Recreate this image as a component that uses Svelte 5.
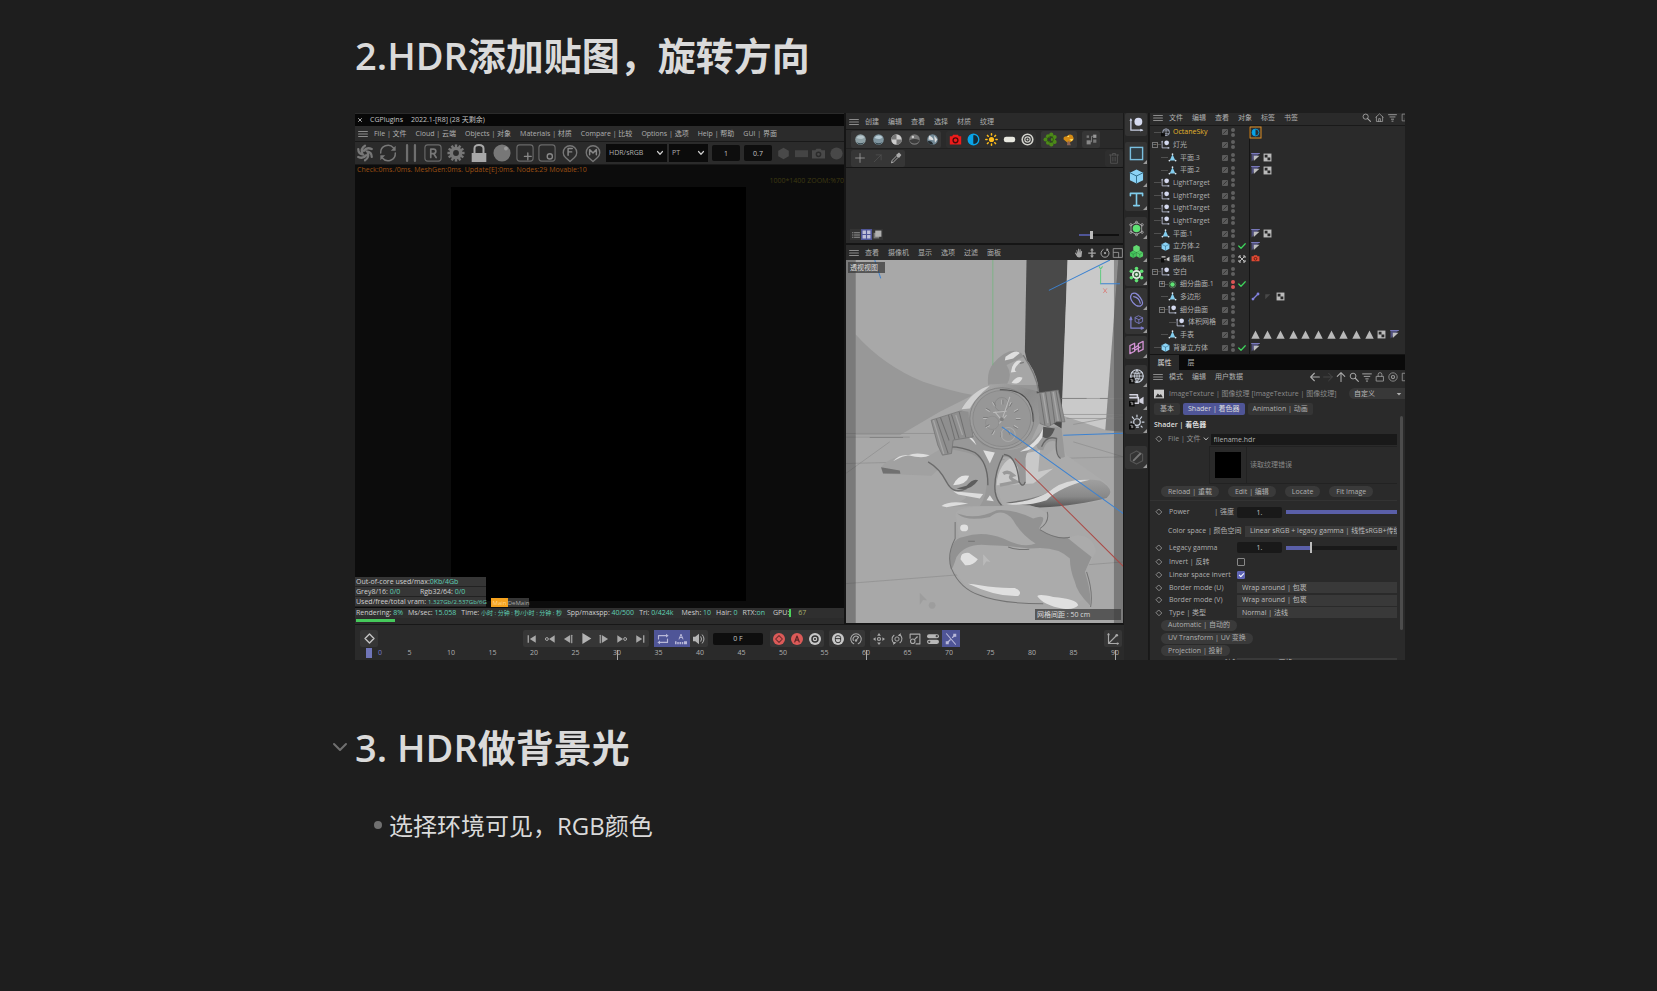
<script>
  const s = (d, c = '#a9a9a9', w = 1.5) => `<path d="${d}" fill="none" stroke="${c}" stroke-width="${w}" stroke-linejoin="round" stroke-linecap="round"/>`;
  const f = (d, c = '#a9a9a9') => `<path d="${d}" fill="${c}"/>`;
  const o = (x, y, r, c = '#a9a9a9') => `<circle cx="${x}" cy="${y}" r="${r}" fill="${c}"/>`;
  const ring = (x, y, r, c = '#a9a9a9', w = 1.5) => `<circle cx="${x}" cy="${y}" r="${r}" fill="none" stroke="${c}" stroke-width="${w}"/>`;
  const ball = (a, b) => o(8, 8, 6.5, a) + `<path d="M3 6Q7 1 13 5Q11 9 3 6z" fill="${b}"/><path d="M3 11Q8 14 13 11Q10 15 6 14z" fill="#33454d"/>`;
  const tooth = Array.from({ length: 12 }, (_, i) => `<rect x="6.9" y="0.4" width="2.2" height="4" fill="#777" transform="rotate(${i * 30} 8 8)"/>`).join('');
  const badge = '<rect x="0" y="9.5" width="6" height="6" fill="#080808"/><path d="M1.5 11h1.5v3M4 11v3" stroke="#ccc" stroke-width=".7" fill="none"/>';

  const icons = {
    menu: s('M1 4H15M1 8H15M1 12H15', '#8c8c8c', 1.9),
    close: s('M5 5L11 11M11 5L5 11', '#bbb', 1.8),
    aperture: s('M8 1.500Q4 4 5.500 8M14 4.500Q9.500 2.500 7 6M14 11.500Q14 7 9.500 6.500M8 14.500Q12 12 10.500 8M2 11.500Q6.500 13.500 9 10M2 4.500Q2 9 6.500 9.500', '#777', 2),
    refresh: s('M1.5 8A6.5 6.5 0 0 1 13 3.5M14.5 8A6.5 6.5 0 0 1 3 12.5', '#777', 1.3) + f('M14.8 1.5V6H10.5zM1.2 14.5V10H5.5z', '#777'),
    pause: s('M4.500 1V15M11.500 1V15', '#6f6f6f', 2),
    reg: '<rect x=".8" y=".8" width="14.4" height="14.4" rx="2.5" fill="none" stroke="#6a6a6a"/>' + s('M6 12V4.5H8.5Q10.5 4.5 10.5 6.5T8.5 8.5H6M8.5 8.5L10.8 12', '#777', 1.5),
    gear: tooth + o(8, 8, 5.6, '#777') + o(8, 8, 2.6, '#2c2c2c'),
    lock: f('M1.5 8H14.500V16H1.500z', '#a8a8a8') + s('M4 8V4Q4 .8 8 .8T12 4V8', '#a8a8a8', 1.8),
    sphere: o(8, 8, 7.6, '#777') + o(11.5, 4, 1.7, '#9a9a9a'),
    plusbox: '<rect x=".8" y=".8" width="14.4" height="14.4" rx="2.5" fill="none" stroke="#6a6a6a"/>' + s('M10.500 8V14M7.500 11H13.500', '#888', 1.2),
    circbox: '<rect x=".8" y=".8" width="14.4" height="14.4" rx="2.5" fill="none" stroke="#6a6a6a"/>' + ring(10.500, 11, 2.3, '#888', 1.2),
    pinf: s('M8 15.500L4 12A6 6 0 1 1 12 12z', '#777', 1.2) + s('M6.300 10V4H10M6.300 7H9.500', '#888', 1.3),
    pinm: s('M8 15.500L4 12A6 6 0 1 1 12 12z', '#777', 1.2) + s('M5 9.500V5L8 8L11 5V9.500', '#888', 1.3),
    hex: f('M8 1L14.500 4.500V11.500L8 15L1.500 11.500V4.500z', '#494949'),
    rect: f('M0 4H16V12.500H0z', '#444'),
    cam: f('M0 4H4L5.500 2H10.500L12 4H16V14H0z', '#494949') + ring(8, 9, 2.6, '#2b2b2b', 1.8),
    disc: o(8, 8, 7.5, '#484848'),
    m1: ball('#8ea0a5', '#b6c6cb'), m2: ball('#7f959f', '#b8ccd6'),
    m3: o(8, 8, 6.500, '#ccc') + f('M8 8V1.500A6.500 6.500 0 0 0 1.500 8zM8 8V14.500A6.500 6.500 0 0 0 14.500 8z', '#777'),
    m4: o(8, 8, 6.500, '#777') + f('M2 9Q8 6 14 9A6.500 6.500 0 0 1 2 9', '#3c3c3c') + o(6, 5, 1.5, '#ccc'),
    m5: o(8, 8, 6.500, '#718895') + f('M4 3Q10 6 9 9L3 8zM10 3L14 8L11 12z', '#ddd') + f('M2 10Q7 9 9 14Q4 15 2 10', '#22292d'),
    redcam: f('M1 4H4L5 2H11L12 4H15V14H1z', '#ee1b1b') + ring(8, 9, 3, '#4b0909', 1.6),
    half: ring(8, 8, 6.500, '#08a4e8', 1.7) + f('M8 1.500A6.500 6.500 0 0 0 8 14.500z', '#08a4e8') + f('M8 3A5 5 0 0 1 8 13z', '#102a38'),
    sun: o(8, 8, 3.2, '#ffbd19') + s('M8 1V2.500M8 13.500V15M1 8H2.500M13.500 8H15M3 3L4 4M12 12L13 13M13 3L12 4M3 13L4 12', '#ffbd19', 1.9),
    pill: '<rect x="1" y="4.500" width="14" height="7" rx="3" fill="#e8e8e0"/>',
    target: ring(8, 8, 6.500, '#d2d2cc', 2) + ring(8, 8, 3.3, '#d2d2cc', 1.4) + o(8, 8, 1.2, '#d2d2cc'),
    leaves: [[5, 4], [9, 2], [13, 5], [2, 8], [5, 12], [9, 14], [13, 11], [11, 8]].map(([x, y]) => o(x, y, 2.6, '#4c8a18')).join('') + ring(8, 8, 3.500, '#275209', 1),
    tree: f('M2 8Q1 4 6 4Q9 0 13 3Q16 8 12 10L8 13z', '#d48b13') + f('M6 5L8 3L9 5zM9 8L14 7L12 10z', '#ffdf68') + f('M7 10H9L11 15H6z', '#8c6454'),
    nodes: '<rect x="2" y="9" width="5" height="5" fill="#888"/><rect x="2" y="3" width="3" height="3" fill="#777"/><rect x="10" y="2" width="4" height="4" fill="#999"/><rect x="10" y="8" width="4" height="4" fill="#777"/>' + s('M7 11H8V4H10', '#888', 1),
    plus: s('M8 1V15M1 8H15', '#aaa', 1.2),
    upright: s('M2 14L13 3M5 3H13V11', '#515151', 1.2),
    picker: s('M2 14L3 11L9 5L11 7L5 13z', '#aaa', 1.3) + f('M8 4L12 .800L15.200 4L12 8z', '#aaa'),
    trash: s('M2 4H14M6 4V2H10V4M3.500 4V15H12.500V4M6.500 7V12M9.500 7V12', '#505050', 1.3),
    list: s('M1 3.500H2M5 3.500H15M1 8H2M5 8H15M1 12.500H2M5 12.500H15', '#999', 1.9),
    gridv: f('M1 1H7V7H1zM9 1H15V7H9zM1 9H7V15H1zM9 9H15V15H9z', '#c0c0d8'),
    stack: f('M1 5H11V15H1z', '#777') + f('M4 1H15V12H4z', '#b0b0b0'),
    hand: f('M3 7L1.500 8L5 14Q8 16 12 14L13 5L11.500 4.500L11 8L10.500 2H9L8.700 8L8 1H6.500V8L5 3L3.800 3.500L5 10z'),
    updown: f('M8 0L11 4H9V7H14V9H9V12H11L8 16L5 12H7V9H2V7H7V4H5z'),
    orbit: s('M5 2.500A6.500 6.500 0 1 0 11 2.500', '#aaa', 1.5) + o(8, 8, 1.8) + f('M11 0L14 3L10 5z'),
    maxi: s('M1 1H15V15H1zM1 7H9V15', '#999', 1.4),
    nul: s('M2 3V14H14', '#c9cfe4', 1.4) + f('M.5 4L2 1L3.500 4zM12 12.500L15.500 14L12 15.500z', '#c9cfe4') + o(10, 5, 4.2, '#d5daf0'),
    square: '<rect x="1.500" y="1.500" width="13" height="13" fill="#303c43" stroke="#79bfe0" stroke-width="1.500"/>',
    cube: f('M8 .5L15 4V12L8 15.500L1 12V4z', '#8cd3f5') + s('M1 4L8 7.500L15 4M8 7.500V15', '#2e6a87', 1),
    text: s('M1.500 4V1.500H14.500V4M8 1.500V14.500M5 14.500H11', '#80cdec', 1.7),
    cage: s('M2.500 4.500L8 1.500L13.500 4.500V11.500L8 14.500L2.500 11.500z', '#aaa', .9) + [[2, 4], [8, 1.500], [14, 4], [14, 12], [8, 14.500], [2, 12]].map(([x, y]) => ring(x, y, 1.2, '#bbb', .8)).join('') + o(8, 8, 4, '#5fe374'),
    cubes: f('M8 1L11.500 3V7L8 9L4.500 7V3z', '#62d971') + f('M4.500 7L8 9V13L4.500 15L1 13V9z', '#43c45b') + f('M11.500 7L15 9V13L11.500 15L8 13V9z', '#55ce66') + s('M4.500 11V15M1 9L4.500 11L8 9M8 9L11.500 11L15 9M11.500 11V15', '#277c39', .5),
    flower: [[2.500, 4.500], [8, 1.500], [13.500, 4.500], [13.500, 11.500], [8, 14.500], [2.500, 11.500]].map(([x, y]) => o(x, y, 1.9, '#5fe374')).join('') + ring(8, 8, 3.800, '#e2efe2', 2) + o(8, 8, 2.900, '#3c6b44') + o(8, 8, 1.5, '#e2efe2'),
    spline: s('M3 2Q7 -1 12 6T12 15Q8 16 4 11T3 2M5 5Q11 6 12 12', '#8b8bd8', 1.3),
    axiscube: s('M2 3V14H15M1 5L2 2L3 5M13 13L15.500 14L13 15', '#7d7dc8', 1.3) + s('M10.500 1L14.500 3V7L10.500 9L6.500 7V3zM6.500 3L10.500 5L14.500 3M10.500 5V9', '#7d7dc8', .9),
    field: s('M1 6L6 3.500V12L1 14.500zM10 4L15 1.500V10L10 12.500zM3.500 9.500L6 8.500L10 5.500M6 11L12 7.500', '#d292d3', 1.4),
    globe: ring(8.500, 7.500, 6.700, '#ccd3df', 1.3) + s('M8.500 1Q3 7.500 8.500 14Q14 7.500 8.500 1M8.500 1V14M2 7.500H15M3 4Q8 6 14 4M3 11Q8 9 14 11', '#ccd3df', .9) + badge,
    camera: s('M1 3H9V6M1 6H10V12H5', '#d3d3df', 1.7) + f('M11 8L15.500 5V13L11 11z', '#d3d3df') + badge,
    light: ring(8.500, 7.500, 3.5, '#ccd3df', 1.3) + s('M8.500 0V2M2 7.500H3M14 7.500H16M3.500 2L5 4M13.500 2L12 4M13 12L14 13M8 13H10', '#ccd3df', 1.3) + badge,
    pen: s('M8 1L14.500 4.500V11.500L8 15L1.500 11.500V4.500z', '#555', 1.2) + s('M5 11L12 4', '#777', 2),
    search: ring(6.500, 6.500, 4.600, '#aaa', 1.5) + s('M10 10L15 15', '#aaa', 1.8),
    home: s('M1.500 7.500L8 1.500L14.500 7.500M2.500 7V15H13.500V7M6.500 15V10H9.500V15', '#aaa', 1.3),
    filter: s('M1 3H15M3.500 7H12.500M6 11H10M7 14.500H9', '#aaa', 1.5),
    popout: s('M10 2H2V14H14V9M7 10L15 2', '#999', 1.3),
    left: s('M15 8H1M7 2L1 8L7 14', '#aaa', 1.7),
    right: s('M1 8H15M9 2L15 8L9 14', '#484848', 1.5),
    up: s('M8 15V1M2 7L8 1L14 7', '#aaa', 1.7),
    olock: s('M2.500 7H13.500V14.500H2.500zM5 7V4Q5 1 8 1T11 4V7', '#999', 1.4),
    ringdot: ring(8, 8, 6.700, '#999', 1.3) + ring(8, 8, 2.500, '#999', 1.8),
    picture: f('M0 1H16V15H0z', '#ccc') + f('M2 13L6 7L9 10L11 8L14 13z', '#333'),
    dia: s('M8 2.500L13.500 8L8 13.500L2.500 8z', '#999', 1.7),
    key: s('M8 1.500L14.500 8L8 14.500L1.500 8z', '#c4c4c4', 2),
    first: f('M1 2H3V14H1zM14 2V14L4.500 8z'),
    prevkey: ring(3, 8, 2.3, '#aaa', 1.6) + f('M15.500 2V14L6.500 8z'),
    prev: s('M14 2V14', '#aaa', 1.800) + f('M11.500 1.500V14.500L1.500 8z'),
    play: f('M2 0L15 8L2 16z', '#b4b4b4'),
    next: s('M2 2V14', '#aaa', 1.800) + f('M4.500 1.500V14.500L14.500 8z'),
    nextkey: ring(13, 8, 2.3, '#aaa', 1.6) + f('M.5 2V14L9.500 8z'),
    last: f('M13 2H15V14H13zM2 2V14L11.500 8z'),
    loop: s('M2 8V3.500H13M14 8V12.500H3', '#b8b8d8', 1.5) + f('M12 1L15.500 3.500L12 6zM4 10L.5 12.500L4 15z', '#b8b8d8'),
    autok: s('M5.500 8L8 1.500L10.500 8M6.500 6H9.500', '#b8b8d8', 1.3) + f('M0 11H2V15H0zM3 12H5V15H3zM6 12H8V15H6zM9 12H11V15H9zM12 11H16V15H12z', '#b8b8d8'),
    sound: f('M0 5H3L8 1V15L3 11H0z', '#b4b4b4') + s('M10.500 5Q12.500 8 10.500 11M12.500 2.500Q17 8 12.500 13.500', '#b4b4b4', 1.3),
    redkey: o(8, 8, 8, '#dc5a58') + s('M8 3.500L12.500 8L8 12.500L3.500 8z', '#682a2b', 1.4),
    reda: o(8, 8, 8, '#dc5a58') + s('M5 12L8 4L11 12M6 9.500H10', '#5d2526', 1.6),
    geark: o(8, 8, 8, '#c8c8c8') + ring(8, 8, 4, '#333', 2) + o(8, 8, 1.4, '#333'),
    mouse: o(8, 8, 8, '#c8c8c8') + s('M4.500 8V6Q4.500 3.500 8 3.500T11.500 6V10Q11.500 13 8 13T4.500 10zM4.500 7.500H11.500', '#333', 1.3),
    dial: s('M5 14.300A7 7 0 1 1 11 14.300', '#aaa', 1.400) + s('M4.500 10A4 4 0 0 1 10.500 5M8 10L11.500 5.500', '#aaa', 1.4) + o(8, 10, 1.6),
    move: f('M8 0L10.500 3.500H5.500zM8 16L10.500 12.500H5.500zM0 8L3.500 5.500V10.500zM16 8L12.500 5.500V10.500z') + ring(8, 8, 2, '#aaa', 1.6),
    rot: s('M5 14A6.500 6.500 0 0 1 4 3M11 2A6.500 6.500 0 0 1 12 13', '#aaa', 1.4) + ring(8, 8, 2.8, '#aaa', 1.3) + f('M13 0V4H9zM3 16V12H7z'),
    scale: s('M1.500 7V1.500H14.500V14.500H9.500', '#aaa', 1.5) + ring(5, 11, 3, '#aaa', 1.5) + s('M7.500 8.500L11 5', '#aaa', 1.5),
    toggles: '<rect x="0" y="1.500" width="16" height="5.500" rx="2.700" fill="#b8b8b8"/><rect x="0" y="9" width="16" height="5.500" rx="2.700" fill="#b8b8b8"/>' + o(13, 4.200, 1.5, '#444') + o(3, 11.700, 1.5, '#444'),
    snap: s('M2 1L14 15M4 12L7 9M10 6L13 3', '#b8b8d8', 1.500) + '<rect x="1" y="11" width="4" height="4" fill="#b8b8d8"/><rect x="11" y="1" width="4" height="4" fill="#b8b8d8"/>',
    graph: s('M2 1V14H15M2 14L12 4', '#aaa', 1.5) + o(13, 3, 1.8) + o(2, 2, 1.5) + o(14, 14, 1.5),
    sky: ring(9, 7.500, 6, '#b9c2d8', 1.3) + s('M4 5H14M4 10H14M9 2V13', '#b9c2d8', 1) + f('M0 9H7V15H0z', '#0d0d0d'),
    poly: f('M8 2L13 13.500H3z', '#83cdee') + [[8, 2], [2.500, 13.500], [13.500, 13.500]].map(([x, y]) => o(x, y, 1.5, '#dbe6ee')).join(''),
    sds: ring(8, 8, 6, '#587a5c', 1.600) + o(8, 8, 4, '#5fe374'),
    ocam: f('M1 4H8V6H1zM1 11H8V9H1z', '#ccc') + f('M10 8L15 5V13L10 11z', '#ccc') + f('M0 8H6V15H0z', '#0d0d0d'),
    slash: '<rect x="2" y="2" width="12" height="12" rx="2" fill="#5b5b5b"/>' + s('M5 11L11 5', '#292929', 1.5),
    check: s('M1.500 8L6 12.500L14.500 3.500', '#3ed65c', 2.4),
    cross: s('M2 5V2H5M11 2H14V5M14 11V14H11M5 14H2V11', '#ddd', 2) + o(8, 8, 2, '#ddd') + s('M4.500 4.500L6 6M10 10L11.500 11.500M11.500 4.500L10 6M4.500 11.500L6 10', '#ddd', 1.7),
    phong: f('M1 1H15L1 15z', '#50507c') + f('M5 5H15L5 14z', '#bdbdbd') + s('M1 1H15', '#7878ba', 1.800),
    phongoff: f('M4 4H13L4 13z', '#484848'),
    checker: f('M1 1H15V15H1z', '#bbb') + f('M3 3H8V8H3zM8 8H13V13H8z', '#292929'),
    bone: s('M4 12L12 4', '#8181dc', 2.4) + o(3.500, 12.500, 2.5, '#8181dc') + o(12.500, 3.500, 2.5, '#8181dc'),
    tri: f('M8 1L15.500 15.500H.5z', '#b9b9b9'),
    skytag: '<rect x="0" y="0" width="16" height="16" fill="#2a2f33" stroke="#d98b24" stroke-width="1.500"/>' + ring(8, 8, 5, '#08a4e8', 1.2) + f('M8 3A5 5 0 0 0 8 13z', '#08a4e8'),
    tagcam: f('M1 4H5V2H11V4H15V13H1z', '#e24a34') + ring(8, 8.500, 2.500, '#521509', 1.5),
    chev: s('M3 5L8 10.500L13 5', '#ccc', 2.4),
    down: f('M2 5H14L8 12z', '#b0b0b0'),
    fold: s('M2 5L8 11L14 5', '#6f6f6f', 2)
  };

  const octMenu = ['File | 文件', 'Cloud | 云端', 'Objects | 对象', 'Materials | 材质', 'Compare | 比较', 'Options | 选项', 'Help | 帮助', 'GUI | 界面'];
  const octTools = ['aperture', 'refresh', 'pause', 'reg', 'gear', 'lock', 'sphere', 'plusbox', 'circbox', 'pinf', 'pinm'];
  const matGroups = [['m1', 'm2', 'm3', 'm4', 'm5'], ['redcam', 'half', 'sun', 'pill', 'target'], ['leaves', 'tree'], ['nodes']];
  const toolGroups = [['nul'], ['square', 'cube', 'text'], ['cage', 'cubes', 'flower'], ['spline', 'axiscube'], ['field'], ['globe', 'camera', 'light'], ['pen']];
  const tris = Array(10).fill('tri');
  const tree = [
    { n: 'OctaneSky', i: 'sky', l: 0, t: ['skytag'], hot: true },
    { n: '灯光', i: 'nul', l: 0, box: '−' },
    { n: '平面.3', i: 'poly', l: 1, t: ['phong', 'checker'] },
    { n: '平面.2', i: 'poly', l: 1, t: ['phong', 'checker'] },
    { n: 'LightTarget', i: 'nul', l: 0 },
    { n: 'LightTarget', i: 'nul', l: 0 },
    { n: 'LightTarget', i: 'nul', l: 0 },
    { n: 'LightTarget', i: 'nul', l: 0 },
    { n: '平面.1', i: 'poly', l: 0, t: ['phong', 'checker'] },
    { n: '立方体.2', i: 'cube', l: 0, m: 'check', t: ['phong'] },
    { n: '摄像机', i: 'ocam', l: 0, m: 'cross', t: ['tagcam'] },
    { n: '空白', i: 'nul', l: 0, box: '−' },
    { n: '细分曲面.1', i: 'sds', l: 1, box: '+', m: 'check', red: true },
    { n: '多边形', i: 'poly', l: 1, t: ['bone', 'phongoff', 'checker'] },
    { n: '细分曲面', i: 'nul', l: 1, box: '−' },
    { n: '体积网格', i: 'nul', l: 2 },
    { n: '手表', i: 'poly', l: 1, t: [...tris, 'checker', 'phong'] },
    { n: '背景立方体', i: 'cube', l: 0, m: 'check', t: ['phong'] }
  ];
  const frames = Array.from({ length: 19 }, (_, i) => i * 5);
  const transport = ['first', 'prevkey', 'prev', 'play', 'next', 'nextkey', 'last'];
  const marks = Array.from({ length: 12 }, (_, i) => i * 30);
</script>

{#snippet icon(name, size = 10)}
  <svg class="ic" width={size} height={size} viewBox="0 0 16 16" aria-hidden="true">{@html icons[name]}</svg>
{/snippet}

{#snippet btn(name, size = 10)}
  <button type="button" aria-label={name}>{@render icon(name, size)}</button>
{/snippet}

{#snippet menu(items)}
  {@render icon('menu', 10)}
  {#each items as item}<button type="button">{item}</button>{/each}
{/snippet}

<main>
  <h2>2.HDR添加贴图，旋转方向</h2>

  <figure>
    <section class="left">
      <div class="octane">
        <div class="otitle">{@render icon('close', 8)}<span>CGPlugins</span><span>2022.1-[R8] (28 天剩余)</span></div>
        <nav class="omenu">{@render menu(octMenu)}</nav>
        <div class="otools">
          <div class="oicons">{#each octTools as t}{@render btn(t, 18)}{/each}</div>
          <label class="sel hdr"><select aria-label="Color response"><option>HDR/sRGB</option></select>{@render icon('chev', 8)}</label>
          <label class="sel pt"><select aria-label="Kernel"><option>PT</option></select>{@render icon('chev', 8)}</label>
          <input class="num" aria-label="Scale" value="1" />
          <input class="num" aria-label="Exposure" value="0.7" />
          <div class="shapes">{#each ['hex', 'rect', 'cam', 'disc'] as t}{@render btn(t, 13)}{/each}</div>
        </div>
        <div class="render">
          <p class="info">Check:0ms./0ms. MeshGen:0ms. Update[E]:0ms. Nodes:29 Movable:10</p>
          <p class="zoom">1000*1400 ZOOM:%70</p>
          <div class="frame"></div>
          <div class="over">
            <div class="stats">
              <p>Out-of-core used/max:<b>0Kb/4Gb</b></p>
              <p><span class="half">Grey8/16: <b>0/0</b></span>Rgb32/64: <b>0/0</b></p>
              <p>Used/free/total vram: <b class="small">1.327Gb/2.537Gb/6G</b></p>
            </div>
            <div class="passes"><button type="button" class="on">Main</button><button type="button">DeMain</button></div>
          </div>
        </div>
        <div class="status">
          <span>Rendering: <b>8%</b></span><span>Ms/sec: <b>15.058</b></span><span>Time: <b class="small">小时 : 分钟 : 秒/小时 : 分钟 : 秒</b></span><span>Spp/maxspp: <b>40/500</b></span><span>Tri: <b>0/424k</b></span><span class="wide">Mesh: <b>10</b></span><span>Hair: <b>0</b></span><span>RTX:<b>on</b></span><span class="wide">GPU:<i></i><em>67</em></span>
        </div>
        <div class="progress"><div style="width: 8%"></div></div>
      </div>

      <div class="mid">
        <nav class="mmenu">{@render menu(['创建', '编辑', '查看', '选择', '材质', '纹理'])}</nav>
        <div class="mtools">
          {#each matGroups as g}<div class="grp">{#each g as t}{@render btn(t, 13)}{/each}</div>{/each}
        </div>
        <div class="mtools second">
          <div class="grp">{@render btn('plus')}{@render btn('upright')}{@render btn('picker', 12)}</div>
          <div class="grp">{@render btn('trash', 12)}</div>
        </div>
        <div class="mats">
          <div class="views">{@render btn('list', 8)}{@render btn('gridv', 9)}{@render btn('stack', 9)}</div>
          <input class="size" type="range" aria-label="Preview size" min="0" max="100" value="30" />
        </div>
        <nav class="mmenu vmenu">{@render menu(['查看', '摄像机', '显示', '选项', '过滤', '面板'])}
          <div class="vnav">{#each ['hand', 'updown', 'orbit', 'maxi'] as t}{@render icon(t, 10)}{/each}</div>
        </nav>
        <div class="view">
          <svg viewBox="18 15 832 1088" preserveAspectRatio="xMidYMid slice" role="img" aria-label="透视视图">
            <defs>
              <linearGradient id="metal" x1="0" y1="0" x2="1" y2="1"><stop offset="0" stop-color="#b5b5b5" /><stop offset=".5" stop-color="#8b8b8b" /><stop offset="1" stop-color="#a2a2a2" /></linearGradient>
              <linearGradient id="leaf" x1="0" y1="0" x2="0" y2="1"><stop offset="0" stop-color="#a0a0a0" /><stop offset=".6" stop-color="#898989" /><stop offset="1" stop-color="#555" /></linearGradient>
            </defs>
            <rect x="18" y="15" width="832" height="1088" fill="#a8a8a8" />
            <path d="M48 238Q130 330 250 380Q340 410 400 420L300 470L180 540H48z" fill="#989898" />
            <path d="M560 15H683L665 520L600 480L555 290z" fill="#494949" />
            <path d="M683 15H835L800 525L665 480z" fill="#c9c9c9" />
            <path d="M835 15H850V530L796 525z" fill="#858585" />
            <path d="M18 535H285M18 546H210M665 430H850M670 478H850M680 490H850M700 508L850 480M18 625L850 605M18 985L850 920M18 655L150 560M700 560L850 605" fill="none" stroke="#8d8d8d" stroke-width="2" />
            <path d="M90 547H190M665 430H740M780 430H806" stroke="#777" stroke-width="2" />
            <path d="M445 390Q440 350 460 325Q510 270 545 295Q580 340 598 410z" fill="#969696" />
            <path d="M500 330Q520 360 500 390H595Q585 340 552 305z" fill="#a6a6a6" />
            <path d="M497 305Q530 280 540 294L520 310L495 316zM517 335Q530 310 545 318Q515 345 530 350L513 352zM515 384Q530 360 548 368Q540 390 515 384z" fill="#dedede" />
            <path d="M540 325L552 322M550 300Q590 360 596 408" stroke="#7b7b7b" stroke-width="4" fill="none" />
            <path d="M124 636Q160 590 270 600L340 560L430 590L460 750L310 756Q370 740 380 725Q310 690 298 640L275 662L130 656z" fill="#a1a1a1" />
            <path d="M124 636L180 646L182 656L130 655z" fill="#707070" />
            <path d="M160 618Q180 595 210 600Q190 600 160 618M205 600Q230 590 270 600Q250 612 205 600M305 752Q330 735 385 745L320 756zM340 708L430 716L420 730L355 718z" fill="#ddd" />
            <path d="M265 620Q300 640 320 680Q340 720 380 700" fill="none" stroke="#6c6c6c" stroke-width="4" />
            <path d="M340 690Q355 655 388 662Q380 690 340 690z" fill="#e2e2e2" />
            <path d="M350 700Q390 710 415 675Q400 668 380 692z" fill="#5d5d5d" />
            <path d="M470 700L480 620L530 595L620 600L665 560L680 600L780 670Q825 700 808 725Q790 745 610 757L490 750z" fill="#ababab" />
            <path d="M498 742Q620 725 650 695Q700 665 780 676Q830 705 800 728Q720 750 600 757z" fill="url(#leaf)" />
            <path d="M500 746Q600 735 640 700Q680 670 750 674Q660 695 620 735Q560 755 500 746z" fill="#d9d9d9" />
            <path d="M470 690Q475 620 530 600L600 585L595 650L640 640L580 685z" fill="#c9c9c9" />
            <path d="M490 655Q505 645 520 660Q500 665 530 680L480 690" fill="none" stroke="#999" stroke-width="10" />
            <path d="M350 790Q335 760 400 755L570 750Q640 770 620 800Q600 820 615 835Q660 860 710 840Q760 840 768 890L735 950Q765 1020 750 1055Q735 1010 700 1060Q640 1060 610 1040Q490 1060 380 995Q350 960 333 930Q320 880 358 850z" fill="#ababab" />
            <path d="M352 775Q410 795 470 765Q520 760 580 790Q630 770 597 820Q630 850 680 845Q710 870 755 905L735 950Q755 1010 750 1050Q710 1010 705 980Q690 945 690 910Q650 870 570 880Q490 870 450 870Q380 860 350 905Q330 970 330 920Q330 850 370 845Q430 825 490 850Q550 880 587 865Q545 840 520 795Q490 755 450 785Q380 800 352 775z" fill="#929292" />
            <path d="M346 800V850Q320 900 335 940Q360 1000 420 1020Q480 1045 610 1045M600 820Q630 800 622 770M600 823Q650 855 690 846M740 950Q760 1010 752 1055M505 875Q530 885 568 882M385 858H405" fill="none" stroke="#737373" stroke-width="3" />
            <ellipse cx="373" cy="818" rx="12" ry="10" fill="#e0e0e0" />
            <path d="M362 912Q362 890 388 893L414 912Q400 932 376 930zM385 985Q400 985 420 990Q480 1000 525 998Q550 1010 535 1022Q470 1025 385 985zM592 1022Q600 1015 640 1025Q710 1030 715 1050Q700 1065 670 1060Q610 1050 592 1022z" fill="#e0e0e0" />
            <path d="M300 570Q330 545 400 540Q440 570 485 580Q530 595 585 550Q620 500 665 520L675 605Q650 620 650 560Q620 550 610 585Q590 585 590 570Q560 580 557 610L558 680Q548 700 538 680L535 640Q520 600 490 605Q466 650 466 700Q475 745 492 752H420Q445 720 440 650Q430 600 370 590L300 575z" fill="#989898" />
            <path d="M330 575Q370 575 405 592Q445 620 444 690M490 600Q460 660 466 710Q470 735 485 750M492 598Q530 600 538 680Q550 700 556 680M605 575Q618 540 650 550Q645 600 662 610" fill="none" stroke="#666" stroke-width="4" />
            <path d="M430 585L465 592L450 625zM385 545Q400 545 410 570zM440 735L450 720L462 738zM540 590Q590 565 610 520L615 530Q600 570 565 585z" fill="#dedede" />
            <path d="M610 515L645 520Q630 560 608 545z" fill="#555" />
            <g fill="#8f8f8f" stroke="#707070" stroke-width="2">
              <path d="M274 495L360 468L385 462L400 545L340 555L335 595L308 600L294 570z" />
              <path d="M585 415L655 405L675 500L650 500L625 515L600 505z" />
              <path d="M290 492L325 595M302 487L328 556M326 480L345 553M335 478L358 550M358 470L378 547M600 415L615 510M617 410L632 510M632 408L645 504M648 406L665 500" fill="none" stroke-width="3" />
            </g>
            <path d="M281 495L312 596M348 480L368 540M609 413L624 504M640 410L655 498" stroke="#a6a6a6" stroke-width="4" />
            <path d="M360 465Q400 400 450 388L500 385L590 408L600 500L570 565Q490 600 430 570Q390 540 385 470z" fill="url(#metal)" />
            <path d="M365 462Q400 405 450 392Q405 430 390 460z" fill="#d0d0d0" />
            <ellipse cx="486" cy="490" rx="96" ry="92" fill="#9c9c9c" stroke="#777" stroke-width="2" />
            <ellipse cx="486" cy="490" rx="87" ry="84" fill="#979797" stroke="#828282" stroke-width="2" />
            <path d="M480 404Q580 400 580 500" fill="none" stroke="#4c4c4c" stroke-width="3" />
            {#each marks as a}<path d="M486 434V448" stroke="#b9b9b9" stroke-width="3" transform="rotate({a} 486 490)" /><path d="M489 434V448" stroke="#6e6e6e" stroke-width="2" transform="rotate({a} 486 490)" />{/each}
            <circle cx="486" cy="448" r="21" fill="none" stroke="#848484" stroke-width="2" /><circle cx="505" cy="538" r="21" fill="none" stroke="#a9a9a9" stroke-width="3" /><circle cx="457" cy="503" r="20" fill="none" stroke="#898989" stroke-width="2" />
            <path d="M486 495L510 425M486 495L465 470M460 472L500 468M478 505L500 480" stroke="#bbb" stroke-width="3" /><circle cx="486" cy="492" r="6" fill="#808080" />
            <path d="M430 897L452 920L440 918L430 932z" fill="#c0c0c0" opacity=".7" />
            <path d="M240 1012L262 1035L250 1034L240 1048z" fill="#999" opacity=".7" />
            <circle cx="277" cy="1050" r="10" fill="#999" opacity=".7" />
            <path d="M18 15H48V1103H18zM822 15H850V1103H822z" fill="#3b3b3b" opacity=".42" />
            <path d="M459 15V330" stroke="#69b978" stroke-width="2" />
            <path d="M105 15L123 70M627 106L810 15M486 515L850 775M670 540L850 534M780 86H840" stroke="#3c82d1" stroke-width="3" />
            <path d="M525 610L850 933" stroke="#aa4a46" stroke-width="3" />
            <path d="M782 86V45M777 34L782 42L788 34" fill="none" stroke="#62ca80" stroke-width="3" />
            <path d="M790 100L801 114M801 100L790 114" stroke="#dd6a63" stroke-width="2" />
          </svg>
          <span class="vlabel">透视视图</span><span class="vgrid">网格间距 : 50 cm</span>
        </div>
      </div>

      <div class="time">
        <div class="keys">
          <div class="grp">{@render btn('key', 11)}</div>
          <div class="grp trans">{#each transport as t}{@render btn(t, t === 'play' ? 11 : 10)}{/each}</div>
          <div class="grp"><span class="lit">{@render btn('loop', 12)}{@render btn('autok', 12)}</span>{@render btn('sound', 12)}</div>
          <input class="num cur" aria-label="Current frame" value="0 F" />
          <div class="grp">{#each ['redkey', 'reda', 'geark'] as t}{@render btn(t, 12)}{/each}</div>
          <div class="grp">{#each ['mouse', 'dial'] as t}{@render btn(t, 12)}{/each}</div>
          <div class="grp">{#each ['move', 'rot', 'scale', 'toggles'] as t}{@render btn(t, 12)}{/each}<span class="lit">{@render btn('snap', 12)}</span></div>
          <div class="grp end">{@render btn('graph', 12)}</div>
        </div>
        <div class="ruler">{#each frames as n}<span class:zero={n === 0} class:tick={n === 30 || n === 60 || n === 90}>{n}</span>{/each}</div>
      </div>
    </section>

    <aside class="palette">
      {#each toolGroups as g}<div>{#each g as t}{@render btn(t, 15)}{/each}</div>{/each}
    </aside>

    <section class="right">
      <nav class="mmenu rmenu">{@render menu(['文件', '编辑', '查看', '对象', '标签', '书签'])}
        <div class="vnav">{#each ['search', 'home', 'filter', 'popout'] as t}{@render icon(t, 9)}{/each}</div>
      </nav>
      <div class="tree">
        {#each tree as r}
          <div class="row">
            <div class="name l{r.l}" class:hot={r.hot}>
              <span class="twig">{#if r.box}<span class="box">{r.box}</span>{/if}</span>
              {@render icon(r.i, 9)}<span>{r.n}</span>
            </div>
            {@render icon('slash', 8)}
            <span class="dots" class:red={r.red}><i></i><i></i></span>
            <span class="mark">{#if r.m}{@render icon(r.m, 8)}{/if}</span>
            <div class="tags">{#each r.t ?? [] as t}<span>{@render icon(t, t === 'skytag' ? 11 : 9)}</span>{/each}</div>
          </div>
        {/each}
      </div>
      <div class="atabs"><button type="button" class="on">属性</button><button type="button">层</button></div>
      <nav class="mmenu amenu">{@render menu(['模式', '编辑', '用户数据'])}
        <div class="vnav">{#each ['left', 'right', 'up', 'search', 'filter', 'olock', 'ringdot', 'popout'] as t}{@render icon(t, 10)}{/each}</div>
      </nav>
      <div class="atitle">{@render icon('picture', 10)}<span>ImageTexture | 图像纹理 [ImageTexture | 图像纹理]</span><label class="sel custom"><select aria-label="Layout"><option>自定义</option></select>{@render icon('down', 6)}</label></div>
      <div class="pills"><button type="button">基本</button><button type="button" class="on">Shader | 着色器</button><button type="button">Animation | 动画</button></div>
      <div class="attrs">
        <h3>Shader | 着色器</h3>
        <div class="file">{@render icon('dia', 8)}<label for="file">File | 文件</label>{@render icon('chev', 6)}<input id="file" value="filename.hdr" /></div>
        <div class="preview"><div class="thumb"><div></div></div><p>读取纹理错误</p></div>
        <div class="acts"><button type="button">Reload | 重载</button><button type="button">Edit | 编辑</button><button type="button">Locate</button><button type="button">Fit Image</button></div>
        <div class="arow power">{@render icon('dia', 8)}<label for="power">Power<span>| 强度</span></label><input id="power" class="num" value="1." /><div class="bar"><div style="width: 100%"></div></div></div>
        <div class="arow space"><label for="space">Color space | 颜色空间</label><select id="space"><option>Linear sRGB + legacy gamma | 线性sRGB+传统伽马</option></select></div>
        <div class="arow gamma">{@render icon('dia', 8)}<label for="gamma">Legacy gamma</label><input id="gamma" class="num" value="1." /><div class="bar knob"><div style="width: 22%"></div></div></div>
        <div class="rows">
          <div class="arow">{@render icon('dia', 8)}<label for="inv">Invert | 反转</label><input id="inv" type="checkbox" /></div>
          <div class="arow">{@render icon('dia', 8)}<label for="lin">Linear space invert</label><input id="lin" type="checkbox" checked /></div>
          <div class="arow">{@render icon('dia', 8)}<label for="bu">Border mode (U)</label><select id="bu"><option>Wrap around | 包裹</option></select></div>
          <div class="arow">{@render icon('dia', 8)}<label for="bv">Border mode (V)</label><select id="bv"><option>Wrap around | 包裹</option></select></div>
          <div class="arow">{@render icon('dia', 8)}<label for="ty">Type | 类型</label><select id="ty"><option>Normal | 法线</option></select></div>
          <div class="one"><button type="button">Automatic | 自动的</button></div>
          <div class="one"><button type="button">UV Transform | UV 变换</button></div>
          <div class="one"><button type="button">Projection | 投射</button></div>
        </div>
        <div class="arow cut"><label for="uv">UV mapping | UV映射</label><select id="uv"><option>Mesh UV | 网格UV</option></select></div>
        <div class="scroll"></div>
      </div>
    </section>
  </figure>

  <h2 class="third"><button type="button" class="fold" aria-label="Collapse section">{@render icon('fold', 16)}</button>3. HDR做背景光</h2>
  <ul><li>选择环境可见，RGB颜色</li></ul>
</main>

<style>
  :global(body) { background: #1e1e1e; }
  * { box-sizing: border-box; }
  main { margin: 0 252px 0 355px; min-height: 100vh; color: #dadada; font-family: "Open Sans", "Noto Sans CJK SC", sans-serif; }
  h2 { margin: 0; padding-top: 31px; height: 113px; font-size: 38px; line-height: 48px; font-weight: 600; white-space: nowrap; }
  h2.third { position: relative; padding-top: 63px; height: 144px; }
  .fold { position: absolute; left: -23px; top: 79px; }
  ul { margin: 0; padding: 0 0 0 34px; list-style: none; font-size: 24px; line-height: 44px; }
  li::before { content: ""; float: left; width: 8px; height: 8px; margin: 17px 0 0 -15px; border-radius: 50%; background: #707070; }

  figure { margin: 0; display: grid; grid-template-columns: minmax(0, 1fr) 25px 256px; aspect-ratio: 1050 / 547; overflow: hidden; background: #2a2a2a; color: #b0b0b0; font-size: 7px; line-height: 10px; white-space: nowrap; }
  p, h3 { margin: 0; font-size: 7px; }
  b { font-weight: 400; color: #5fcfb4; }
  button, input, select { font: inherit; color: inherit; border: 0; padding: 0; margin: 0; background: none; appearance: none; border-radius: 0; min-width: 0; outline: 0; }
  button { display: flex; align-items: center; justify-content: center; white-space: nowrap; }
  .ic { display: block; flex: none; overflow: visible; }
  .left { display: grid; grid-template-columns: minmax(0, 491fr) minmax(0, 278fr); grid-template-rows: minmax(0, 1fr) 36px; min-height: 0; }

  .octane { display: flex; flex-direction: column; background: #2b2b2b; border-right: 2px solid #151515; min-height: 0; padding-top: 1px; }
  .otitle { display: flex; align-items: center; gap: 8px; height: 12px; padding-left: 1px; background: #080808; color: #c4c4c4; }
  .otitle .ic { margin-right: -2px; }
  .omenu { display: flex; align-items: center; gap: 9px; height: 16px; padding-left: 3px; border-bottom: 1px solid #191919; }
  .omenu .ic { margin-right: -3px; }
  .otools { display: flex; align-items: center; height: 23px; padding-left: 1px; border-bottom: 1px solid #191919; }
  .oicons { display: flex; justify-content: space-between; width: 246px; flex: none; }
  .sel { position: relative; display: flex; align-items: center; }
  .sel select { width: 100%; height: 100%; }
  .sel .ic { position: absolute; right: 3px; }
  .hdr, .pt { height: 18px; padding-left: 3px; background: #0b0b0b; flex: none; }
  .hdr { width: 61px; margin-left: 4px; }
  .pt { width: 39px; margin-left: 2px; }
  .num { height: 16px; text-align: center; background: #0e0e0e; color: #c4c4c4; border-radius: 2px; }
  .otools .num { width: 28px; margin-left: 4px; flex: none; }
  .shapes { flex: 1; display: flex; justify-content: space-between; margin: 0 1px 0 5px; }
  .render { position: relative; flex: 1; min-height: 0; background: #0c0c0c; display: flex; flex-direction: column; }
  .info { color: #9d5013; line-height: 9px; padding-left: 2px; }
  .zoom { color: #3f3b12; text-align: right; line-height: 13px; }
  .frame { flex: 1; margin: 0 98px 7px 96px; background: #000; }
  .over { position: absolute; left: 0; bottom: 1px; display: flex; align-items: flex-end; }
  .stats { width: 131px; color: #d0d0d0; }
  .stats p { height: 10px; line-height: 9px; padding-left: 1px; background: #363636; border-bottom: 1px solid #222; }
  .small { font-size: 6px; }
  .half { display: inline-block; width: 64px; }
  .passes { display: flex; margin-left: 5px; color: #a7a7a7; font-size: 6px; }
  .passes button { height: 9px; width: 21px; background: #363636; }
  .passes .on { width: 17px; background: #f5a21e; color: #ffd48a; }
  .status { display: flex; align-items: center; gap: 5px; height: 10px; padding-left: 1px; background: #2f2f2f; color: #d0d0d0; overflow: hidden; }
  .status .wide { margin-left: 3px; }
  .status i { display: inline-block; width: 2px; height: 8px; background: #4bd35a; vertical-align: middle; }
  .status em { font-style: normal; color: #a8b16b; margin-left: 7px; }
  .progress { height: 6px; padding: 1px 1px 2px; }
  .progress div { height: 3px; background: #45c95b; }

  .mid { display: flex; flex-direction: column; min-height: 0; padding-top: 1px; border-right: 1px solid #1a1a1a; }
  .mmenu { display: flex; align-items: center; gap: 9px; height: 16px; flex: none; padding-left: 3px; border-bottom: 1px solid #191919; }
  .mmenu > .ic { margin-right: -3px; }
  .vnav { display: flex; gap: 3px; margin-left: auto; }
  .grp { display: flex; background: #363636; border-radius: 2px; }
  .grp button { width: 18px; height: 17px; }
  .mtools { display: flex; align-items: center; gap: 5px; height: 19px; flex: none; padding-left: 5px; border-bottom: 1px solid #202020; }
  .mtools .grp:nth-child(2) { background: #2e2e2e; }
  .mtools.second { justify-content: space-between; border-color: #151515; }
  .mats { display: flex; align-items: flex-end; justify-content: space-between; height: 77px; flex: none; padding: 0 4px 3px; border-bottom: 2px solid #151515; }
  .views { display: flex; background: #333; }
  .views button { width: 11px; height: 11px; }
  .views button:nth-child(2) { background: #4f5597; }
  .size { width: 40px; height: 11px; background: linear-gradient(90deg, #4f5597 30%, #101010 30%) center / 100% 2px no-repeat; }
  .size::-webkit-slider-thumb { appearance: none; width: 3px; height: 8px; background: #bbb; }
  .vmenu { height: 15px; border: 0; }
  .view { position: relative; flex: 1; min-height: 0; border-bottom: 1px solid #151515; }
  .view svg { position: absolute; width: 100%; height: 100%; }
  .vlabel, .vgrid { position: absolute; background: rgba(60, 60, 60, .75); color: #ddd; line-height: 11px; padding: 0 2px; }
  .vlabel { left: 2px; top: 2px; width: 37px; }
  .vgrid { right: 2px; bottom: 3px; width: 86px; }

  .time { grid-column: 1 / -1; display: flex; flex-direction: column; padding-top: 5px; border-top: 1px solid #171717; }
  .keys { display: flex; align-items: center; height: 17px; padding: 0 2px 0 5px; gap: 5px; }
  .keys .trans { margin-left: 140px; }
  .lit { display: flex; background: #4f5597; }
  .keys .cur { width: 50px; height: 12px; margin-right: 2px; }
  .keys .end { margin-left: auto; }
  .ruler { display: flex; justify-content: space-between; height: 13px; padding: 0 9px 0 13px; }
  .ruler span { position: relative; width: 0; display: flex; justify-content: center; line-height: 11px; }
  .ruler .tick::after { content: ""; position: absolute; top: 3px; width: 1px; height: 10px; background: #aaa; }
  .ruler .zero { padding-left: 12px; margin-right: -12px; color: #777ccf; }
  .ruler .zero::before { content: ""; position: absolute; left: -2px; top: 1px; width: 6px; height: 10px; background: #7075b8; }

  .palette { display: flex; flex-direction: column; padding: 0 1px; background: #262626; border-right: 1px solid #181818; }
  .palette div { background: #343434; border-radius: 2px; margin-bottom: 6px; }
  .palette div:nth-child(4), .palette div:nth-child(3) { margin-bottom: 2px; }
  .palette div:nth-child(6) { margin-bottom: 12px; }
  .palette button { position: relative; width: 100%; height: 23px; }
  .palette div:not(:first-child) button::after { content: ""; position: absolute; right: 0; bottom: 1px; border-left: 4px solid transparent; border-bottom: 4px solid #9a9a9a; }

  .right { display: flex; flex-direction: column; min-width: 0; min-height: 0; overflow: hidden; border-left: 1px solid #1a1a1a; }
  .rmenu { height: 13px; padding-bottom: 3px; }
  .rmenu .vnav { gap: 4px; margin-right: -5px; }
  .tree { height: 228px; flex: none; display: grid; grid-template-rows: repeat(18, minmax(0, 1fr)); background: linear-gradient(90deg, transparent 99px, #151515 99px, #151515 100px, transparent 100px); }
  .row { display: flex; align-items: center; }
  .name { display: flex; align-items: center; gap: 3px; width: 70px; margin-right: 1px; flex: none; }
  .hot { color: #e5b62c; }
  .twig { width: 7px; margin-right: -3px; height: 1px; background: #505050; display: flex; align-items: center; flex: none; }
  .l0 { padding-left: 4px; }
  .l1 { padding-left: 11px; }
  .l2 { padding-left: 19px; }
  .box { width: 6px; height: 6px; border: 1px solid #777; background: #2a2a2a; line-height: 4px; text-align: center; margin-left: -2px; }
  .dots { display: flex; flex-direction: column; gap: 1px; width: 4px; margin: 0 3px 0 2px; }
  .dots i { width: 4px; height: 4px; border-radius: 50%; background: #606060; }
  .dots.red i { background: #dd5555; }
  .mark { width: 11px; }
  .tags { display: grid; grid-template-columns: repeat(12, minmax(0, 1fr)); width: 152px; }
  .tags span { display: flex; justify-content: center; }
  .atabs { display: flex; height: 16px; flex: none; background: #0a0a0a; border-top: 1px solid #141414; }
  .atabs button { width: 24px; }
  .atabs .on { width: 29px; background: #2a2a2a; color: #ddd; }
  .amenu { height: 14px; border: 0; }
  .amenu .vnav { margin-right: -6px; }
  .atitle { display: flex; align-items: center; height: 19px; flex: none; padding-left: 4px; gap: 5px; color: #8b8b8b; }
  .custom { flex: none; width: 56px; height: 11px; margin-left: auto; padding-left: 5px; border-radius: 6px 0 0 6px; background: #383838; color: #bbb; }
  .pills { display: flex; gap: 3px; height: 13px; flex: none; padding-left: 4px; }
  .pills button { height: 12px; padding: 0 5px; background: #353535; border-radius: 2px; }
  .pills button:first-child { padding: 0 6px; }
  .pills .on { background: #4f5597; color: #ddd; }
  .attrs { position: relative; flex: 1; min-height: 0; padding-right: 8px; overflow: hidden; }
  h3 { height: 16px; padding: 4px 0 0 4px; font-weight: 600; color: #ddd; line-height: 10px; }
  .file { display: flex; align-items: center; height: 14px; padding-left: 5px; gap: 2px; }
  .file label { margin-left: 3px; color: #8f8f8f; }
  .file input { flex: 1; height: 11px; padding-left: 3px; background: #191919; }
  .preview { display: flex; align-items: center; height: 38px; margin-left: 59px; border: 1px solid #222; border-width: 1px 0; color: #888; }
  .thumb { width: 38px; height: 100%; padding: 5px 0 0 5px; border: 1px solid #222; border-width: 0 1px; margin-right: 3px; }
  .thumb div { width: 26px; height: 26px; background: #000; }
  .acts { display: flex; gap: 9px; height: 17px; padding: 2px 0 0 11px; border-bottom: 1px solid #333; }
  .acts button, .one button { height: 11px; padding: 0 7px; border-radius: 6px; background: #3a3a3a; }
  .arow { display: flex; align-items: center; padding-left: 5px; }
  .arow label { width: 74px; padding-left: 6px; flex: none; display: flex; justify-content: space-between; }
  .arow label span { padding-right: 3px; }
  .arow select { flex: 1; height: 11px; padding-left: 5px; background: #393939; color: #bbb; overflow: hidden; }
  .arow .num { width: 45px; height: 11px; margin-right: 4px; background: #191919; }
  .power { height: 22px; }
  .space { height: 16px; padding-left: 12px; }
  .space label { width: 83px; }
  .gamma { height: 17px; }
  .bar { flex: 1; height: 4px; background: #191919; display: flex; align-items: center; }
  .bar div { height: 4px; background: #5a5fa8; }
  .knob::after { content: ""; width: 2px; height: 11px; background: #bbb; }
  .rows { height: 101px; display: grid; grid-template-rows: repeat(8, minmax(0, 1fr)); }
  .rows [type="checkbox"] { width: 8px; height: 8px; border: 1px solid #888; border-radius: 1px; }
  .rows [type="checkbox"]:checked { border-color: #6167b4; background: #5d63b4; }
  .rows [type="checkbox"]:checked::after { content: ""; display: block; width: 2px; height: 4px; margin: 0 0 0 2px; border: solid #fff; border-width: 0 1px 1px 0; rotate: 45deg; }
  .one { display: flex; align-items: center; padding-left: 11px; }
  .cut { padding-left: 5px; height: 12px; }
  .cut label { width: 82px; padding-left: 13px; }
  .scroll { position: absolute; right: 2px; top: 0; width: 3px; height: 214px; border-radius: 2px; background: #4c4c4c; }
</style>
